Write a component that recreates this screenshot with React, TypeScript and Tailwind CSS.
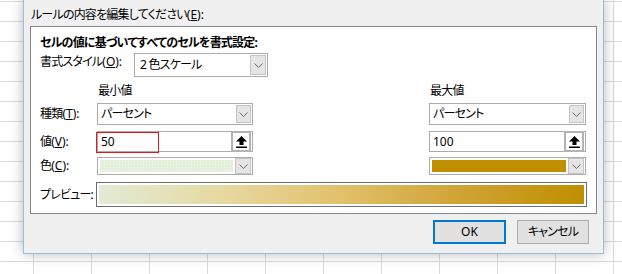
import React from 'react';

const FONT = "font-['Noto_Sans','Noto_Sans_CJK_JP',sans-serif] [font-feature-settings:'palt'] tracking-[-0.8px]";

const Chevron = () => (
    <svg width="9" height="5" viewBox="0 0 9 5" fill="none">
        <polyline points="0.5,0.5 4.5,4.5 8.5,0.5" stroke="#6b6b6b" strokeWidth="1" />
    </svg>
);

const UploadIcon = () => (
    <svg width="11" height="12" viewBox="0 0 11 12">
        <polygon points="5.5,0 11,5.5 7.5,5.5 7.5,9 3.5,9 3.5,5.5 0,5.5" fill="#000" />
        <rect x="0" y="10.5" width="11" height="1.5" fill="#000" />
    </svg>
);

// アクセスキー付きのラベル
const Label = ({ text, accessKey, className = '' }: { text: string; accessKey: string; className?: string }) => (
    <span className={`block h-[16px] leading-[16px] whitespace-nowrap ${className}`}>
        {text}
        <span className="tracking-normal">(<u>{accessKey}</u>):</span>
    </span>
);

const DropButton = ({ className }: { className: string }) => (
    <div className={`flex items-center justify-center bg-[#e5e5e5] border border-[#c4c4c4] ${className}`}>
        <Chevron />
    </div>
);

const Select = ({ text }: { text: string }) => (
    <div className="flex items-center h-[22px] border border-[#ababab] bg-white">
        <span className="flex-1 pl-[3px] leading-[16px]">{text}</span>
        <DropButton className="w-[15px] h-[18px] mr-[1px]" />
    </div>
);

const ValueInput = ({ value, marked }: { value: string; marked?: boolean }) => (
    <div className="relative flex items-center h-[21px] border border-[#ababab] bg-white">
        <span className="flex-1 pl-[3px] leading-[16px] tracking-normal">{value}</span>
        <div className="flex items-center justify-center w-[20px] h-[21px] border-2 border-[#b3b3b3] bg-white mr-[1px]">
            <UploadIcon />
        </div>
        {marked && <div className="absolute left-[-2px] top-0 w-[63px] h-[21px] border border-[#e8141b]" />}
    </div>
);

const ColorSelect = ({ fill }: { fill: string }) => (
    <div className="flex items-center h-[18px] border border-[#ababab] bg-white">
        <div className="flex-1 h-full p-[2px]">
            <div className={`w-full h-full ${fill}`} />
        </div>
        <DropButton className="w-[16px] h-[16px] mr-[1px]" />
    </div>
);

export default function App() {
    return (
        <div className={`relative w-[622px] h-[274px] overflow-hidden bg-white bg-[linear-gradient(to_right,#d9d9d9_1px,transparent_1px),linear-gradient(to_bottom,#d9d9d9_1px,transparent_1px)] bg-[size:58px_20px] bg-[position:33px_1px] text-[12px] text-black ${FONT}`}>
            <div className="absolute left-[23px] top-0 w-[581px] h-[254px] bg-[#f0f0f0] border-x border-b border-[#95bde6] shadow-[0_0_12px_rgba(0,0,0,0.28)]">
                <div className="pl-[7px] pt-[7px]">
                    <Label text="ルールの内容を編集してください" accessKey="E" />
                </div>

                <div className="mt-[3px] ml-[6px] w-[567px] h-[188px] border border-[#828790] bg-white pl-[9px] pr-[10px] pt-[8px]">
                    <div className="font-bold h-[16px] leading-[16px]">セルの値に基づいてすべてのセルを書式設定:</div>

                    <div className="flex mt-[2px]">
                        <Label text="書式スタイル" accessKey="O" className="w-[94px] mt-[1px]" />
                        <div className="flex items-center w-[134px] h-[24px] border border-[#ababab] bg-white">
                            <span className="flex-1 pl-[5px] leading-[16px]">2&nbsp;色スケール</span>
                            <DropButton className="w-[16px] h-[20px] mr-[1px]" />
                        </div>
                    </div>

                    <div className="grid grid-cols-[57px_156px_1fr_157px] mt-[6px] h-[16px] leading-[16px]">
                        <span />
                        <span className="pl-[1px]">最小値</span>
                        <span />
                        <span className="pl-[1px]">最大値</span>
                    </div>

                    <div className="grid grid-cols-[57px_156px_1fr_157px] items-center mt-[4px]">
                        <Label text="種類" accessKey="T" />
                        <Select text="パーセント" />
                        <span />
                        <Select text="パーセント" />
                    </div>

                    <div className="grid grid-cols-[57px_156px_1fr_157px] items-center mt-[6px]">
                        <Label text="値" accessKey="V" />
                        <ValueInput value="50" marked />
                        <span />
                        <ValueInput value="100" />
                    </div>

                    <div className="grid grid-cols-[57px_156px_1fr_157px] items-center mt-[5px]">
                        <Label text="色" accessKey="C" />
                        <ColorSelect fill="bg-[#e2efda] bg-[radial-gradient(#f4f8ef_0.6px,transparent_0.7px)] bg-[size:3px_3px]" />
                        <span />
                        <ColorSelect fill="bg-[#bf8f00]" />
                    </div>

                    <div className="flex items-center mt-[7px] mr-[-1px]">
                        <span className="w-[56px] h-[16px] leading-[16px] whitespace-nowrap">プレビュー:</span>
                        <div className="flex-1 h-[25px] border border-[#6e6e6e] bg-white p-[2px]">
                            <div className="w-full h-full bg-[linear-gradient(to_right,#e2ebd6_0%,#e6d9a2_25%,#e2c36f_48%,#d0a233_75%,#bf8f00_100%)]" />
                        </div>
                    </div>
                </div>

                <div className="flex justify-end gap-[11px] mt-[6px] pr-[14px]">
                    <button className="w-[73px] h-[24px] border-2 border-[#0078d7] bg-[#e1e1e1] leading-[16px] tracking-normal">OK</button>
                    <button className="w-[72px] h-[24px] border border-[#adadad] bg-[#e1e1e1] leading-[16px]">キャンセル</button>
                </div>
            </div>
        </div>
    );
}
